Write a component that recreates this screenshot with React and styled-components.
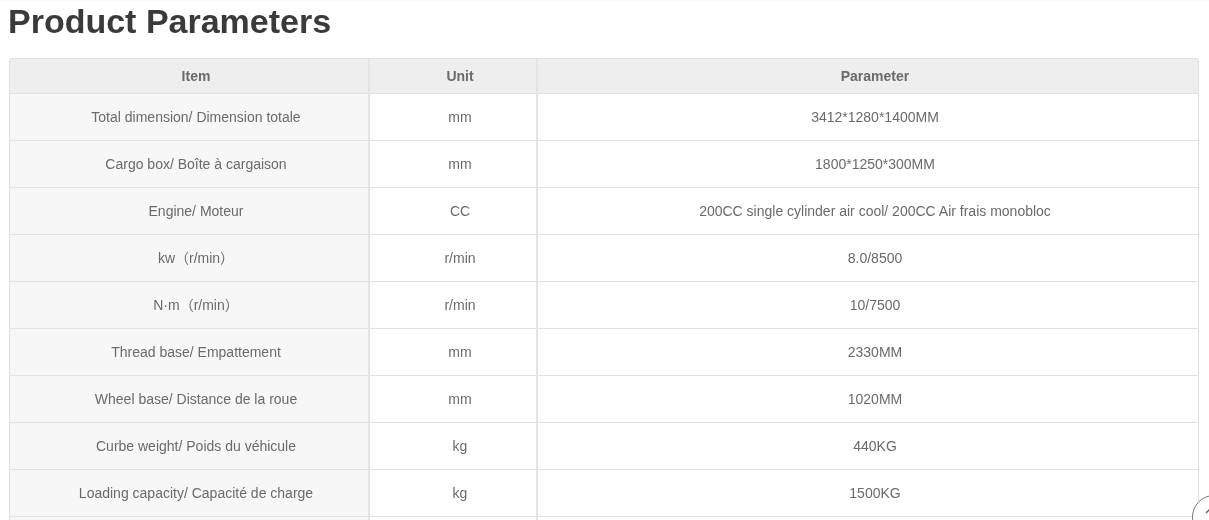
import styled, { createGlobalStyle } from "styled-components"

const rows = [
  ["Total dimension/ Dimension totale", "mm", "3412*1280*1400MM"],
  ["Cargo box/ Boîte à cargaison", "mm", "1800*1250*300MM"],
  ["Engine/ Moteur", "CC", "200CC single cylinder air cool/ 200CC Air frais monobloc"],
  ["kw（r/min）", "r/min", "8.0/8500"],
  ["N·m（r/min）", "r/min", "10/7500"],
  ["Thread base/ Empattement", "mm", "2330MM"],
  ["Wheel base/ Distance de la roue", "mm", "1020MM"],
  ["Curbe weight/ Poids du véhicule", "kg", "440KG"],
  ["Loading capacity/ Capacité de charge", "kg", "1500KG"],
  ["", "", ""],
]

const GlobalStyle = createGlobalStyle`
  html, body {
    margin: 0;
    height: 520px;
    overflow: hidden;
    background: #fff;
    font-family: "Liberation Sans", Arial, "Noto Sans CJK SC", sans-serif;
  }
`

const Page = styled.main`
  height: 520px;
  padding: 0 10px 0 9px;
  box-sizing: border-box;
  overflow: hidden;
  border-top: 2px solid #fafafa;
  filter: grayscale(1);
`

const Title = styled.h1`
  margin: 0 0 17px -1px;
  height: 39px;
  line-height: 39px;
  font-size: 34px;
  font-weight: 700;
  color: #3a3a3a;
`

const Table = styled.table`
  width: 1190px;
  table-layout: fixed;
  border-collapse: separate;
  border-spacing: 0;
  border: 1px solid #e0e0e0;
  border-bottom: none;
  border-radius: 3px 3px 0 0;
  font-size: 14px;
  line-height: 20px;
  color: #6a6a6a;
`

const HeadCell = styled.th`
  height: 34px;
  padding: 0 0 0 14px;
  background: #eee;
  font-weight: 700;
  font-size: 14px;
  text-align: center;
  color: #6a6a6a;
  border-bottom: 1px solid #e2e2e2;
  border-left: ${(p) => (p.$first ? "none" : "2px solid #e4e4e4")};
`

const Cell = styled.td`
  height: 46px;
  padding: 0 0 0 14px;
  text-align: center;
  background: ${(p) => (p.$first ? "#f7f7f7" : "#fff")};
  border-bottom: 1px solid #e2e2e2;
  border-left: ${(p) => (p.$first ? "none" : "2px solid #e4e4e4")};
`

const TopButton = styled.button`
  position: fixed;
  left: 1192px;
  top: 495px;
  width: 44px;
  height: 44px;
  padding: 0;
  border: 1px solid #777;
  border-radius: 50%;
  background: #fff;
  cursor: pointer;
`

const Arrow = styled.svg`
  position: absolute;
  left: 12px;
  top: 11px;
  width: 10px;
  height: 10px;
`

function App() {
  return (
    <>
      <GlobalStyle />
      <Page>
        <Title>Product Parameters</Title>
        <Table>
          <colgroup>
            <col style={{ width: 358 }} />
            <col style={{ width: 168 }} />
            <col />
          </colgroup>
          <thead>
            <tr>
              <HeadCell $first>Item</HeadCell>
              <HeadCell>Unit</HeadCell>
              <HeadCell>Parameter</HeadCell>
            </tr>
          </thead>
          <tbody>
            {rows.map((r, i) => (
              <tr key={i}>
                <Cell $first>{r[0]}</Cell>
                <Cell>{r[1]}</Cell>
                <Cell>{r[2]}</Cell>
              </tr>
            ))}
          </tbody>
        </Table>
      </Page>
      <TopButton aria-label="Back to top">
        <Arrow viewBox="0 0 10 10" fill="none" stroke="#666" strokeWidth="1.5">
          <path d="M1 6 L5 2 L9 6" />
        </Arrow>
      </TopButton>
    </>
  )
}

export default App
